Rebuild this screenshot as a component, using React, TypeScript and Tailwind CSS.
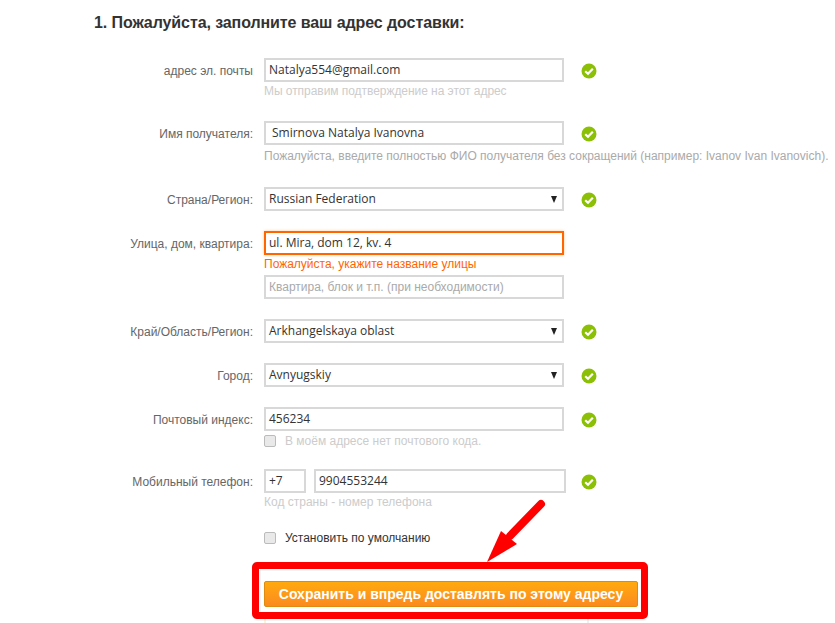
const LABEL_FONT = "font-['Liberation_Sans',Arial,sans-serif]";

function Check() {
  return (
    <svg width="16" height="16" viewBox="0 0 16 16" className="shrink-0">
      <circle cx="8" cy="8" r="7.5" fill="#8cc007" />
      <path d="M4.2 8.2 L7 10.8 L11.8 5.8" fill="none" stroke="#fff" strokeWidth="2.2" />
    </svg>
  );
}

function Field({ value, select, className = 'w-[300px]' }: { value: string; select?: boolean; className?: string }) {
  return (
    <div className={`h-6 shrink-0 border-2 border-[#d8d8d8] bg-white flex items-center justify-between pl-[3px] pr-[5px] text-[12px] text-[#333] font-['Open_Sans',sans-serif] ${className}`}>
      <span>{value}</span>
      {select && (
        <svg width="6" height="7" viewBox="0 0 6 7">
          <path d="M0 0 H6 L3 7 Z" fill="#222" />
        </svg>
      )}
    </div>
  );
}

function Row({ label, className = '', children, ok = true }: { label: string; className?: string; children: React.ReactNode; ok?: boolean }) {
  return (
    <div className={`flex items-start ${className}`}>
      <div className={`w-[253px] shrink-0 h-6 pt-[2px] flex items-center justify-end text-[12px] text-[#666] ${LABEL_FONT}`}>{label}</div>
      <div className="ml-[11px] w-[300px] shrink-0">{children}</div>
      {ok && <div className="h-6 pt-[1px] ml-[17px] flex items-center"><Check /></div>}
    </div>
  );
}

function Box() {
  return <span className="w-[12px] h-[12px] shrink-0 border border-[#bbb] rounded-[2px] bg-[#e9e9e9]" />;
}

export default function App() {
  return (
    <div className={`relative w-[835px] h-[623px] overflow-hidden bg-white ${LABEL_FONT}`}>
      <h2 className="pl-[94px] pt-[14px] h-[58px] text-[16px] leading-[18px] font-bold tracking-[-0.09px] text-[#333]">1. Пожалуйста, заполните ваш адрес доставки:</h2>

      <Row label="адрес эл. почты">
        <Field value="Natalya554@gmail.com" />
        <p className="mt-[2px] text-[12px] leading-[14px] text-[#ccc] tracking-[-0.05px]">Мы отправим подтверждение на этот адрес</p>
      </Row>

      <Row label="Имя получателя:" className="mt-[23px]">
        <Field value="Smirnova Natalya Ivanovna" className="w-[300px] !pl-[6px]" />
        <p className="mt-[4px] text-[12px] leading-[14px] text-[#aaa] whitespace-nowrap">Пожалуйста, введите полностью ФИО получателя без сокращений (например: Ivanov Ivan Ivanovich).</p>
      </Row>

      <Row label="Страна/Регион:" className="mt-[24px]">
        <Field value="Russian Federation" select />
      </Row>

      <Row label="Улица, дом, квартира:" className="mt-[20px]" ok={false}>
        <Field value="ul. Mira, dom 12, kv. 4" className="w-[300px] !border-[#f60] shadow-[0_0_3px_#fc9]" />
        <p className="mt-[2px] text-[12px] leading-[14px] text-[#f60]">Пожалуйста, укажите название улицы</p>
        <div className="mt-[4px] h-6 border-2 border-[#d8d8d8] pl-[3px] flex items-center text-[12px] text-[#aaa]">Квартира, блок и т.п. (при необходимости)</div>
      </Row>

      <Row label="Край/Область/Регион:" className="mt-[20px]">
        <Field value="Arkhangelskaya oblast" select />
      </Row>

      <Row label="Город:" className="mt-[20px]">
        <Field value="Avnyugskiy" select />
      </Row>

      <Row label="Почтовый индекс:" className="mt-[20px]">
        <Field value="456234" />
        <div className="mt-[3px] flex items-center gap-[9px] text-[12px] leading-[14px] text-[#ccc]"><Box />В моём адресе нет почтового кода.</div>
      </Row>

      <Row label="Мобильный телефон:" className="mt-[21px]" ok={false}>
        <div className="flex gap-2">
          <Field value="+7" className="w-[42px]" />
          <Field value="9904553244" className="w-[252px]" />
          <div className="h-6 pt-[1px] ml-[7px] flex items-center shrink-0"><Check /></div>
        </div>
        <p className="mt-[2px] text-[12px] leading-[14px] text-[#ccc]">Код страны - номер телефона</p>
      </Row>

      <div className="ml-[264px] mt-[22px] flex items-center gap-[9px] text-[12px] leading-[14px] text-[#333]"><Box />Установить по умолчанию</div>

      <button className="block ml-[264px] mt-[36px] w-[374px] h-[26px] rounded-[2px] border border-[#e08a10] bg-gradient-to-b from-[#ffa90c] to-[#fb8a1e] text-white text-[14px] font-bold">Сохранить и впредь доставлять по этому адресу</button>

      <div className="ml-[264px] mt-[5px] w-[325px] h-[20px] border-x-2 border-l-[#fdf3dc] border-r-[#f0f0f0]" />

      {/* annotation on top of the page */}
      <div className="absolute left-[252px] top-[562px] w-[396px] h-[57px] border-[7px] border-[#f00] rounded-[5px]" />
      <svg className="absolute left-[480px] top-[495px]" width="70" height="72" viewBox="0 0 70 72">
        <path d="M61 9 L30 41" stroke="#f00" strokeWidth="8" strokeLinecap="round" />
        <path d="M7 67 L21 36 L37 49 Z" fill="#f00" />
      </svg>
    </div>
  );
}
